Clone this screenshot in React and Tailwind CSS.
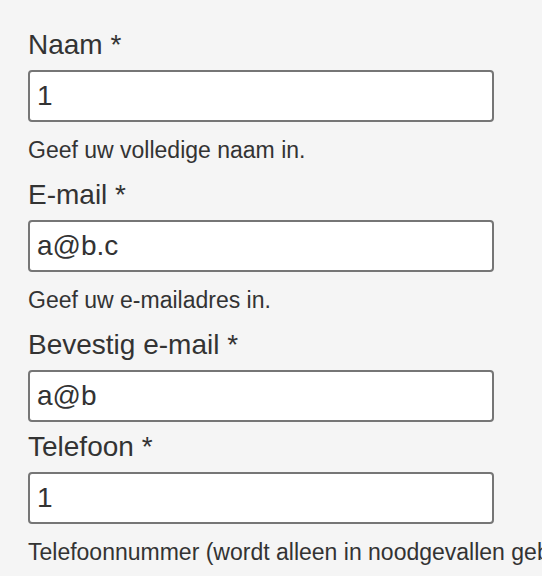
import React from "react";

function Field({ label, value, help }) {
  return (
    <div className="mb-2">
      <label className="block text-[28px] leading-[34px] mb-2">{label} *</label>
      <input
        type="text"
        defaultValue={value}
        className="block w-[466px] h-[52px] border-2 border-[#767676] rounded-[4px] bg-white px-[7px] text-[28px] text-[#333] outline-none"
      />
      {help && (
        <p className="mt-[14px] pb-[6px] text-[23px] leading-[28px] whitespace-nowrap">{help}</p>
      )}
    </div>
  );
}

export default function App() {
  return (
    <div
      className="h-screen w-full overflow-hidden bg-[#f5f5f5] text-[#333] pl-[28px] pt-[28px]"
      style={{ fontFamily: '"Liberation Sans", Arial, sans-serif' }}
    >
      <Field label="Naam" value="1" help="Geef uw volledige naam in." />
      <Field label="E-mail" value="a@b.c" help="Geef uw e-mailadres in." />
      <Field label="Bevestig e-mail" value="a@b" />
      <Field
        label="Telefoon"
        value="1"
        help="Telefoonnummer (wordt alleen in noodgevallen gebruikt)."
      />
    </div>
  );
}
